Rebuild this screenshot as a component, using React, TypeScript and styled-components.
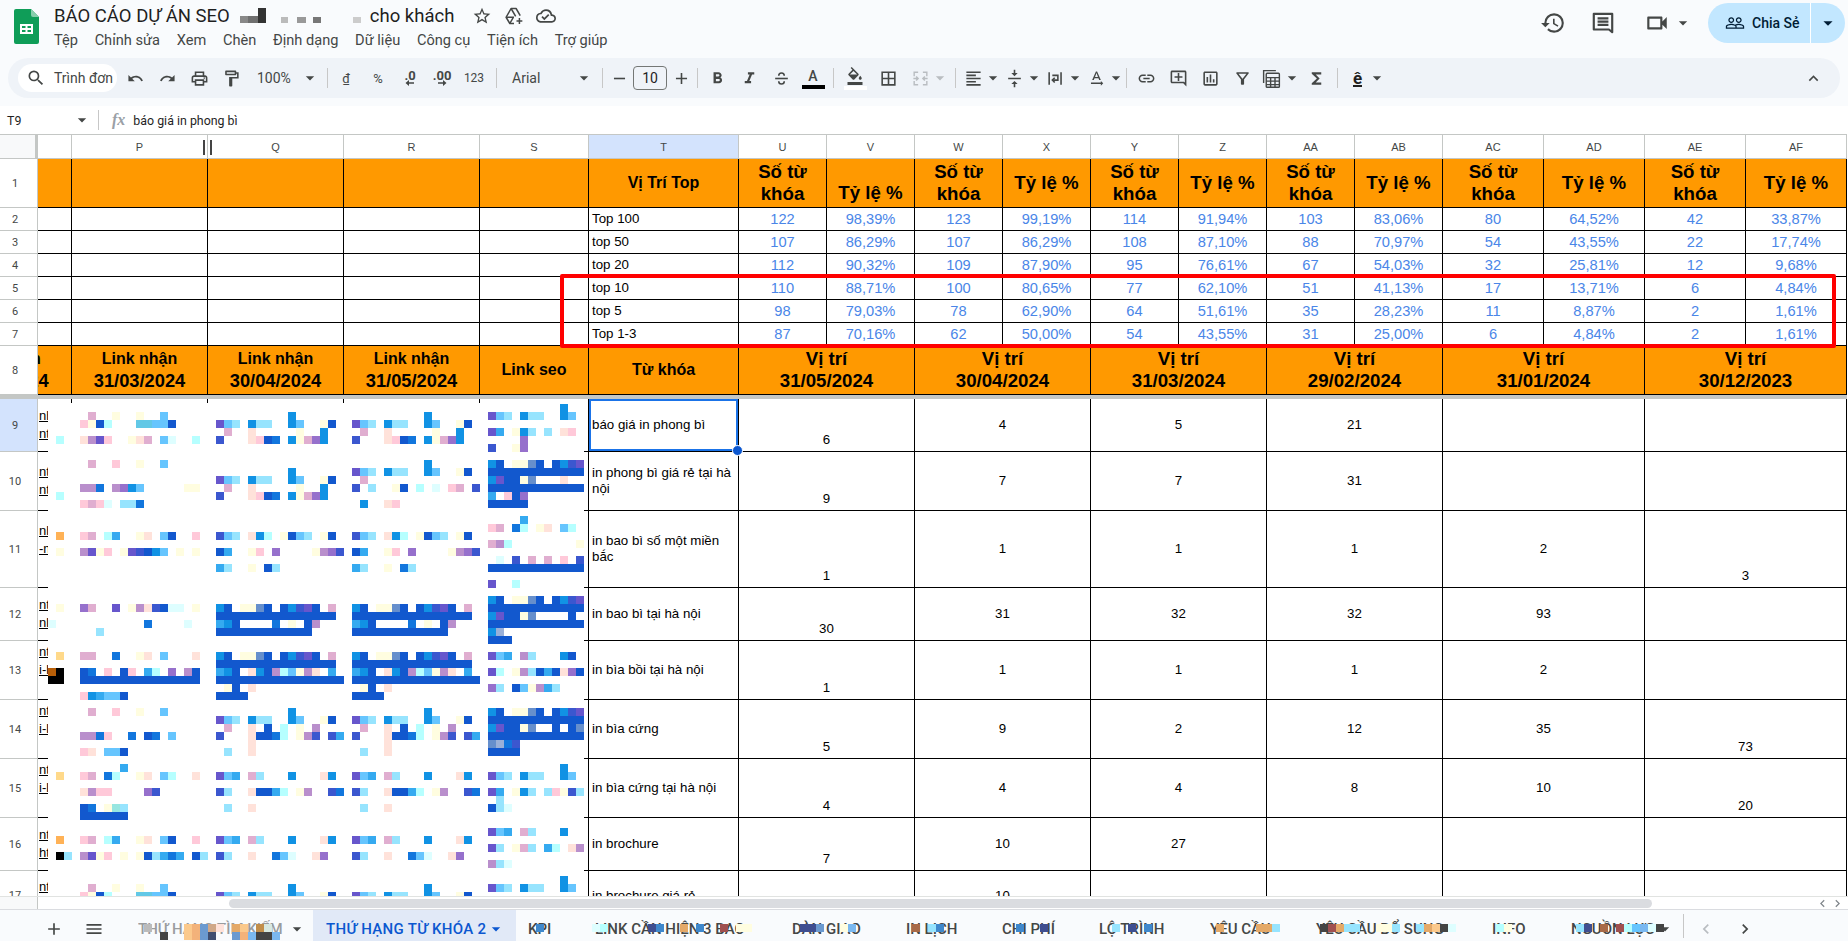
import React from 'react';
import styled, { createGlobalStyle } from 'styled-components';
import {
  MdAdd, MdArrowDropDown, MdBorderAll, MdChevronLeft, MdChevronRight, MdExpandLess, MdFormatAlignLeft,
  MdFormatBold, MdFormatColorFill, MdFormatItalic, MdOutlineFormatPaint, MdFunctions, MdHistory, MdLink, MdMenu,
  MdOutlineAddComment, MdOutlineCloudDone, MdOutlineFilterAlt, MdOutlineInsertChart,
  MdOutlineLocalPrintshop, MdOutlineVideocam, MdPeopleOutline, MdRedo, MdRemove, MdSearch, MdStarBorder,
  MdTextRotationNone, MdUndo, MdVerticalAlignCenter,
} from 'react-icons/md';

const GlobalStyle = createGlobalStyle`
  html, body { margin: 0; padding: 0; height: 100%; overflow: hidden; background: #f9fbfd; }
  body { font-family: Roboto, "Liberation Sans", sans-serif; }
`;

const Page = styled.div`
  width: 1848px;
  height: 941px;
  display: flex;
  flex-direction: column;
  overflow: hidden;
`;

/* top bar */
const Header = styled.header`
  height: 58px;
  flex: none;
  display: flex;
  align-items: flex-start;
`;
const Logo = styled.svg`
  width: 25px;
  height: 35px;
  margin: 9px 15px 0 14px;
  flex: none;
`;
const DocInfo = styled.div`
  display: flex;
  flex-direction: column;
  flex: 1;
`;
const TitleRow = styled.div`
  display: flex;
  align-items: center;
  height: 24px;
  margin-top: 4px;
  color: #1f1f1f;
  font-size: 18.5px;
`;
const TitleText = styled.span`
  white-space: nowrap;
`;
const TitleBlots = styled.svg`
  width: 121px;
  height: 16px;
  margin: 0 9px 0 10px;
  flex: none;
`;
const TitleIcons = styled.div`
  display: flex;
  align-items: center;
  gap: 12px;
  margin-left: 18px;
  color: #444746;
  font-size: 20px;
`;
const MenuBar = styled.nav`
  display: flex;
  gap: 16.7px;
  margin-top: 1px;
  font-size: 14.6px;
  line-height: 22px;
  color: #444746;
`;
const HeaderActions = styled.div`
  display: flex;
  align-items: center;
  height: 46px;
  color: #444746;
`;
const ActionIcon = styled.span<{ $gap?: number }>`
  display: flex;
  align-items: center;
  font-size: 26px;
  margin-right: ${(p) => p.$gap ?? 0}px;
`;
const ShareButton = styled.div`
  width: 137px;
  height: 40px;
  margin: 0 3px 0 15px;
  border-radius: 20px;
  background: #c2e7ff;
  color: #001d35;
  display: flex;
  align-items: center;
  font-size: 14px;
  font-weight: 500;
`;
const ShareMain = styled.span`
  width: 103px;
  height: 40px;
  display: flex;
  align-items: center;
  gap: 7px;
  padding-left: 17px;
  box-sizing: border-box;
  border-right: 1px solid #fff;
  font-size: 14px;
  svg { font-size: 20px; }
`;
const ShareCaret = styled.span`
  flex: 1;
  display: flex;
  justify-content: center;
  font-size: 22px;
`;

/* toolbar */
const Toolbar = styled.div`
  height: 40px;
  flex: none;
  margin: 0 8px;
  border-radius: 20px;
  background: #eff3f8;
  display: flex;
  align-items: center;
  color: #444746;
`;
const SearchPill = styled.div`
  width: 99px;
  height: 28px;
  margin: 0 2px 0 10px;
  border-radius: 14px;
  background: #fff;
  display: flex;
  align-items: center;
  gap: 8px;
  padding-left: 8px;
  box-sizing: border-box;
  font-size: 14px;
  overflow: hidden;
  white-space: nowrap;
  svg { font-size: 20px; flex: none; }
`;
const Tool = styled.div<{ $w?: number; $faded?: boolean; $start?: boolean; $small?: boolean }>`
  width: ${(p) => p.$w ?? 32}px;
  height: 32px;
  flex: none;
  display: flex;
  align-items: center;
  justify-content: ${(p) => (p.$start ? 'flex-start' : 'center')};
  padding-left: ${(p) => (p.$start ? 3 : 0)}px;
  box-sizing: border-box;
  font-size: 14px;
  color: ${(p) => (p.$faded ? '#b9bdc1' : 'inherit')};
  position: relative;
  svg { font-size: ${(p) => (p.$small ? 17 : 19)}px; flex: none; }
`;
const Caret = styled(MdArrowDropDown)<{ $left?: number }>`
  font-size: 20px !important;
  margin-left: ${(p) => p.$left ?? 0}px;
`;
const Sep = styled.span<{ $l?: number; $r?: number }>`
  width: 1px;
  height: 20px;
  flex: none;
  background: #c7c7c7;
  margin: 0 ${(p) => p.$r ?? 3}px 0 ${(p) => p.$l ?? 3}px;
`;
const ToolLabel = styled.span<{ $size?: number; $w?: number; $bold?: boolean; $indent?: number }>`
  font-size: ${(p) => p.$size ?? 14}px;
  font-weight: ${(p) => (p.$bold ? 700 : 400)};
  width: ${(p) => (p.$w ? `${p.$w}px` : 'auto')};
  padding-left: ${(p) => p.$indent ?? 0}px;
  box-sizing: border-box;
  white-space: nowrap;
`;
const DongSign = styled.span`
  font-size: 13px;
  text-decoration: underline;
`;
const DecimalTool = styled.span`
  display: flex;
  flex-direction: column;
  align-items: center;
  line-height: 11px;
  font-size: 13px;
  font-weight: 700;
  svg { font-size: 9px; margin-top: -2px; }
`;
const SizeBox = styled.div`
  width: 34px;
  height: 24px;
  flex: none;
  border: 1px solid #747775;
  border-radius: 4px;
  box-sizing: border-box;
  display: flex;
  align-items: center;
  justify-content: center;
  font-size: 14px;
  color: #1f1f1f;
`;
const ColorGlyph = styled.span<{ $bar: string }>`
  width: 24px;
  display: flex;
  flex-direction: column;
  align-items: center;
  font-size: 14px;
  font-weight: 500;
  line-height: 16px;
  &::after {
    content: '';
    display: block;
    width: 23px;
    height: 4px;
    margin-top: 1px;
    background: ${(p) => p.$bar};
  }
`;
const FillGlyph = styled(ColorGlyph)`
  svg { font-size: 18px; }
`;
const HatE = styled.span`
  margin-left: 5px;
  font-size: 17px;
  font-weight: 700;
  color: #1f1f1f;
  line-height: 16px;
  border-bottom: 2px solid #1f1f1f;
  height: 15px;
`;
const Spacer = styled.span`
  flex: 1;
`;

/* formula bar */
const FormulaBar = styled.div`
  height: 28px;
  flex: none;
  margin-top: 8px;
  background: #fff;
  display: flex;
  align-items: center;
  font-size: 12.4px;
  color: #1f1f1f;
`;
const NameBox = styled.div`
  width: 92px;
  display: flex;
  align-items: center;
  padding-left: 7px;
  box-sizing: border-box;
  color: #1f1f1f;
  svg { font-size: 20px; margin-left: auto; color: #444746; }
`;
const FxSep = styled.span`
  width: 1px;
  height: 20px;
  background: #c7c7c7;
  margin: 0 13px 0 6px;
`;
const FxGlyph = styled.span`
  font-family: "Liberation Serif", serif;
  font-style: italic;
  font-weight: 700;
  font-size: 16px;
  color: #9aa0a6;
  margin-right: 8px;
`;

/* sheet */
const Sheet = styled.div`
  flex: none;
  position: relative;
  height: 762px;
  overflow: hidden;
  background: #fff;
  display: grid;
  grid-template-columns: 38px 34px 136px 136px 136px 109px 150px repeat(8, 88px) repeat(4, 101px);
  grid-template-rows: 25px 49px repeat(6, 23px) 49px 4px 53px 59px 77px 53px 59px 59px 59px 53px 50px;
`;
const Corner = styled.div`
  background: #f8f9fa;
  border-top: 1px solid #c4c7c5;
  border-right: 3px solid #c4c7c5;
  border-bottom: 1px solid #c4c7c5;
  box-sizing: border-box;
`;
const ColHead = styled.div<{ $active?: boolean }>`
  background: ${(p) => (p.$active ? '#d3e3fd' : '#fff')};
  border-top: 1px solid #c4c7c5;
  border-right: 1px solid #c4c7c5;
  border-bottom: 1px solid #c4c7c5;
  box-sizing: border-box;
  display: flex;
  align-items: center;
  justify-content: center;
  font-family: "Liberation Sans", Arial, sans-serif;
  font-size: 11px;
  color: #444746;
`;
const RowHead = styled.div<{ $active?: boolean }>`
  background: ${(p) => (p.$active ? '#d3e3fd' : '#fff')};
  border-right: 1px solid #c4c7c5;
  border-bottom: 1px solid #c4c7c5;
  box-sizing: border-box;
  padding-right: 7px;
  display: flex;
  align-items: center;
  justify-content: center;
  font-size: 11px;
  color: #444746;
`;
const Cell = styled.div<{
  $span?: number;
  $orange?: boolean;
  $size?: number;
  $bold?: boolean;
  $blue?: boolean;
  $left?: boolean;
  $v?: 'center' | 'flex-end';
  $selected?: boolean;
}>`
  grid-column: span ${(p) => p.$span ?? 1};
  position: relative;
  box-sizing: border-box;
  min-width: 0;
  display: flex;
  align-items: ${(p) => p.$v ?? 'center'};
  justify-content: ${(p) => (p.$left ? 'flex-start' : 'center')};
  text-align: ${(p) => (p.$left ? 'left' : 'center')};
  padding: ${(p) => (p.$v === 'flex-end' ? '0 3px 3px' : '0 3px')};
  border-right: 1px solid #000;
  border-bottom: 1px solid #000;
  background: ${(p) => (p.$orange ? '#ff9900' : '#fff')};
  color: ${(p) => (p.$blue ? '#4a86e8' : '#000')};
  font-family: "Liberation Sans", Arial, sans-serif;
  font-size: ${(p) => p.$size ?? 13.3}px;
  font-weight: ${(p) => (p.$bold ? 700 : 400)};
  line-height: ${(p) => (p.$bold ? '22px' : '16px')};
  box-shadow: ${(p) => (p.$selected ? 'inset 0 0 0 2px #1a73e8' : 'none')};
`;
const DateLine = styled.span`
  font-size: 18.3px;
`;
const ClippedCell = styled(Cell)`
  overflow: hidden;
  justify-content: flex-start;
  padding: 0;
`;
const ClippedHeading = styled.div`
  flex: none;
  width: 100px;
  margin-left: -85px;
  white-space: nowrap;
`;
const LinkScraps = styled.div<{ $low?: boolean }>`
  padding: 0 0 ${(p) => (p.$low ? 18 : 0)}px 1px;
  font-size: 13px;
  line-height: 18px;
  text-align: left;
  text-decoration: underline;
  white-space: pre;
`;
const FreezeBar = styled.div`
  grid-column: 1 / -1;
  background: #c4c7c5;
`;
const FillHandle = styled.span`
  position: absolute;
  right: -5px;
  bottom: -5px;
  width: 9px;
  height: 9px;
  border-radius: 50%;
  border: 1px solid #fff;
  background: #0b57d0;
  z-index: 3;
`;
const ResizeHandle = styled.span`
  position: absolute;
  left: 203px;
  top: 6px;
  width: 5px;
  height: 15px;
  border-left: 2px solid #444;
  border-right: 2px solid #444;
`;
const RedBox = styled.div`
  position: absolute;
  left: 560px;
  top: 140px;
  width: 1276px;
  height: 74px;
  box-sizing: border-box;
  border: 4px solid #ff0000;
  border-radius: 2px;
  z-index: 2;
`;
const MosaicPanel = styled.div`
  position: absolute;
  left: 48px;
  top: 269px;
  width: 536px;
  height: 493px;
  background: #fff;
  padding-top: 1px;
  box-sizing: border-box;
  svg { display: block; }
`;

/* scrollbar + tabs */
const ScrollRow = styled.div`
  height: 13px;
  flex: none;
  background: #fff;
  border-top: 1px solid #e1e3e1;
  box-sizing: border-box;
  display: flex;
  align-items: center;
  color: #80868b;
`;
const ScrollCorner = styled.span`
  width: 38px;
  height: 100%;
  box-sizing: border-box;
  border-right: 1px solid #c4c7c5;
  background: #f8f9fa;
`;
const ScrollThumb = styled.span`
  width: 1423px;
  height: 9px;
  margin-left: 191px;
  border-radius: 5px;
  background: #dadce0;
`;
const ScrollArrows = styled.span`
  margin-left: auto;
  width: 30px;
  margin-right: 3px;
  display: flex;
  font-size: 15px;
`;
const TabBar = styled.div`
  height: 32px;
  flex: none;
  position: relative;
  display: flex;
  align-items: stretch;
  background: #f9fbfd;
  border-top: 1px solid #dadce0;
  box-sizing: border-box;
  color: #444746;
  font-size: 15px;
  font-weight: 500;
  white-space: nowrap;
`;
const TabIcon = styled.span<{ $w: number; $faded?: boolean }>`
  width: ${(p) => p.$w}px;
  flex: none;
  display: flex;
  align-items: center;
  justify-content: flex-end;
  padding-top: 7px;
  box-sizing: border-box;
  font-size: 20px;
  color: ${(p) => (p.$faded ? '#b9bdc1' : 'inherit')};
`;
const Tab = styled.span<{ $w: number; $active?: boolean; $pad?: number }>`
  width: ${(p) => p.$w}px;
  flex: none;
  display: flex;
  align-items: center;
  box-sizing: border-box;
  padding: 7px 0 0 ${(p) => p.$pad ?? 0}px;
  background: ${(p) => (p.$active ? '#e1e9f7' : 'transparent')};
  color: ${(p) => (p.$active ? '#0b57d0' : 'inherit')};
  letter-spacing: ${(p) => (p.$active ? '0.3px' : '0')};
  svg { font-size: 20px; }
`;
const TabText = styled.span<{ $w: number }>`
  width: ${(p) => p.$w}px;
  flex: none;
  overflow: hidden;
  color: #9a9c9e;
`;
const TabSep = styled.span`
  width: 1px;
  height: 24px;
  margin: 4px 0 0 2px;
  background: #c7c7c7;
  flex: none;
`;
const TabBlots = styled.svg`
  position: absolute;
  left: 0;
  top: 14px;
  pointer-events: none;
`;

const PALETTE: Record<string, string> = {
  p: '#ffc9d9', m: '#e0aed0', l: '#b98fcc', v: '#9670cc', i: '#6756cc', n: '#3b57cf', B: '#1258ce',
  b: '#1276dd', c: '#1192e4', a: '#35aaf0', s: '#66c5fe', t: '#97e4fe', u: '#b6ffff', w: '#defeff',
  y: '#fffde0', o: '#ffe2da', g: '#668fcc', G: '#9ab0d8', O: '#ffb256', Y: '#ffd98a', K: '#000000',
  R: '#b85f08', T: '#62c8e6', M: '#97e6e0', x: '#bbbbbb', f: '#fbc98c', h: '#f3b27a', D: '#6b9ad0',
  e: '#d0a888', q: '#3f4e70', E: '#e4a968', d: '#444444', j: '#a86a48', k: '#c28e4a', S: '#3f88cc',
  N: '#3f4e90', r: '#a05050', z: '#d8e8e0', V: '#7ab8f0',
};

// redacted area, one entry per 8px row: "<column><colours>[*repeat]"
const SHEET_BLOTS: Record<number, string> = {
  0: '64c',
  1: '5m 8y 11y 14s 30c 47c 55ist 59ctt 64cs',
  2: '4pyBu 11TTssB 21ist 25ctt 30cs 34yB 38ist 42ctt 47cs 51yB',
  3: '22m 25o 31y 34c 39m 42o 48y 51c 55ia 58yct 62t 64op',
  4: '1u 4olip 10yom 14sw 18u 21n 25opBb 30cymvc 38n 42opBb 47cymvc 59v',
  5: '55n 58yv',
  7: '5m 8p 11y 14s 47c 55cB 58yygB 63Bcni',
  8: '30c 38ist 42ctt 47cs 51yB 55B*12',
  9: '21ist 25ctt 30cs 34yB 39m 55ciBByg 64o',
  10: '4llb 8lvcs 17yy 22m 25o 31y 34c 38n 40t 43yB 46u 48w 50pm 53n 55B*12',
  11: '1u 21n 25opBb 30cymvc 55a 57pBv',
  12: '4pmpw 9ttb 39c 42op 55B*5',
  14: '59a',
  15: '55pm 58bu 61yo 64su',
  16: '1O 4pm 7ua 11yo 14sB 18p 21nst 25ocu 29yBst 34yB 38nst 42ocu 46yBst 51yB',
  17: '55mlu 66y',
  18: '1y 4liyp 9yinBcs 16y 18y 21Ba 25yp 28v 33ylvn 38Ba 42yp 45v 50ylvn',
  19: '56w 58n 60m 62m 64p 66n',
  20: '21at 25y 27Bt 38at 42y 44bt 55B*12',
  22: '55i 58u',
  24: '55cB 58yygB 63Bcni',
  25: '1y 4vm 8i 10ylonBww 18y 21cB 24yygB 29Bcni 33B 35m 38cB 41yygB 46Bcni 50B 52m 55B*12',
  26: '21B*15 38B*15 55ciBByg 65B',
  27: '0w 12b 17w 21acB 28b 30y 32Bl 38acB 45b 47y 49Bl 55B*12',
  28: '6t 21B*12 38B*12 55cG',
  29: '55B*3',
  31: '1Y 4mm 8b 11yo 14s 18o 21cB 24yygB 29Bcni 33B 35m 38cB 41yygB 46Bcni 50B 52m 55isa 59lt 64cB',
  32: '21B*15 38B*15',
  33: '0RK 4Bb 7p 9Bp 12au 15v 17lB 21acB 25ocBlusylo 35a 38acB 42ocBlusylo 52a 55iu 58yltBaBovB',
  34: '0KK 4B*15 21B*16 38B*16',
  35: '22yB 25o 39yB 42o 55vt 58Bsylat',
  36: '4pcassB 21B*4 38B*4',
  38: '5m 8p 11y 14s 30c 47c 55cB 58yygB 63Bcni',
  39: '21ist 25ctt 30cs 34yB 38ist 42ctt 47cs 51yB 55B*12',
  40: '22m 25o 27B 29u 31y 33l 39m 42o 44B 46u 48y 50l 55ciBByg 63B 65Bg',
  41: '4llbp 10b 12Bb 15s 21n 25oBBbu 31yln 35na 38n 42oBBbu 48yln 52na 55B*12',
  42: '25o 42o 55gGbn',
  43: '4po 7ssB 22t 25o 39t 42o 55B*4',
  45: '9a 64c',
  46: '1Y 4pm 7bu 11yo 14su 18o 21isa 25mt 30c 34oc 38isa 42mt 47c 51oc 55ist 59ctt 64cs',
  48: '4olpp 12vn 21nt 25oBBau 31yl 35nb 38nt 42oBBau 48yl 52nb 55ia 58yct 62tpynt',
  49: '56t',
  50: '4Bb 7yMt 22t 25o 39t 42o 55Btw',
  51: '4B*6',
  53: '55isa 59mt 64c',
  54: '1O 4pm 7ua 11yo 14sB 18p 21isa 25mt 30c 34oc 38isa 42mt 47c 51oc',
  55: '55it 58ymt 62au 65ol',
  56: '1Kt 4liyp 9y 11yBtaba 18Bt 21nt 25o 28bsw 33ov 38nt 42o 45bsw 50ov',
  57: '55ltw',
  59: '64c',
  60: '5m 8y 11y 14s 30c 47c 55ist 59ctt 64cs',
  61: '4pyBu 11TTssB 21ist 25ctt 30cs 34yB 38ist 42ctt 47cs 51yB',
};

const TAB_BLOTS: Record<number, string> = {
  0: '18x 23fhDeo 29Ef 32kz 67S 74wu 81NS 85E 87S 90r 92yy 100NN 102D 105yV 114j 116tS 127S 130N 139t 141N 143S 152E 157EE 159t 165drEtt 172yyt 177tEfdw 187uy 197tN 200j 202rusV 206wd',
  1: '20d 23fhDq 29DhV 32dd 34V',
};

const Blots = ({ data }: { data: Record<number, string> }) => (
  <>
    {Object.entries(data).flatMap(([row, line]) =>
      line.split(' ').flatMap((token) => {
        const match = token.match(/^(\d+)([a-zA-Z]+)(?:\*(\d+))?$/);
        if (!match) return [];
        const colours = match[3] ? match[2].repeat(Number(match[3])) : match[2];
        return colours.split('').map((key, i) => (
          <rect
            key={`${row}-${match[1]}-${i}`}
            x={(Number(match[1]) + i) * 8}
            y={Number(row) * 8}
            width={8}
            height={8}
            fill={PALETTE[key]}
          />
        ));
      }),
    )}
  </>
);

const SheetsLogo = () => (
  <Logo viewBox="0 0 25 35">
    <path d="M2 0h15l8 8v25a2 2 0 0 1-2 2H2a2 2 0 0 1-2-2V2a2 2 0 0 1 2-2z" fill="#0f9d58" />
    <path d="M17 0l8 8h-6a2 2 0 0 1-2-2z" fill="#87ceac" />
    <path d="M6 15h13v10H6zm2 2v2h3.5v-2zm5.5 0v2H17v-2zM8 21v2h3.5v-2zm5.5 0v2H17v-2z" fill="#fff" fillRule="evenodd" />
  </Logo>
);

const AddToDriveIcon = () => (
  <svg width="20" height="20" viewBox="0 0 24 24" fill="none" stroke="currentColor" strokeWidth="1.8" strokeLinejoin="round">
    <path d="M12 21H7l-4.5-7.5L8.5 3h6l5 8.5" />
    <path d="M8.5 3l5.5 9.5M2.5 13.5H12M7 21l4-7" />
    <path d="M18.5 14.5v7M15 18h7" />
  </svg>
);

const CommentsIcon = () => (
  <svg width="26" height="26" viewBox="0 0 24 24" fill="none" stroke="currentColor" strokeWidth="2" strokeLinejoin="round">
    <path d="M3.5 3.5h17v17l-3-2.5h-14z" />
    <path d="M7 7.8h10M7 10.8h10M7 13.8h10" />
  </svg>
);

const StrikeIcon = () => (
  <svg width="19" height="19" viewBox="0 0 24 24" fill="none" stroke="currentColor" strokeWidth="2">
    <path d="M4 12h16" />
    <path d="M8.5 8.5C8.5 6.3 10 5 12 5s3.5 1.3 3.5 3.5" />
    <path d="M8.5 15.5C8.5 17.7 10 19 12 19s3.5-1.3 3.5-3.5" />
  </svg>
);

const MergeIcon = () => (
  <svg width="19" height="19" viewBox="0 0 24 24" fill="none" stroke="currentColor" strokeWidth="1.8">
    <path d="M4 9V4h5M15 4h5v5M20 15v5h-5M9 20H4v-5" />
    <path d="M3 12h6M6.5 9.5L9 12l-2.5 2.5M21 12h-6M17.5 9.5L15 12l2.5 2.5" />
  </svg>
);

const WrapIcon = () => (
  <svg width="19" height="19" viewBox="0 0 24 24" fill="none" stroke="currentColor" strokeWidth="2">
    <path d="M4 4v16M19 4v16M8 8h7v6H9" />
    <path d="M11 11l-3 3 3 3" />
  </svg>
);

const TableToolIcon = () => (
  <svg width="21" height="21" viewBox="0 0 24 24" fill="none" stroke="currentColor" strokeWidth="1.6">
    <path d="M3 17V3h14" />
    <rect x="6" y="6" width="15" height="16" rx="1" />
    <path d="M6 11h15M6 15h15M6 19h15M11 11v11M16 11v11" />
  </svg>
);

const SmallArrow = ({ right }: { right?: boolean }) => (
  <svg width="10" height="8" viewBox="0 0 10 8" fill="currentColor">
    <path d={right ? 'M1 3.2h5V1l3.5 3L6 7V4.8H1z' : 'M9 3.2H4V1L.5 4 4 7V4.8h5z'} />
  </svg>
);

const COLUMNS = ['', 'P', 'Q', 'R', 'S', 'T', 'U', 'V', 'W', 'X', 'Y', 'Z', 'AA', 'AB', 'AC', 'AD', 'AE', 'AF'];

const TOP_ROWS: { label: string; values: string[] }[] = [
  { label: 'Top 100', values: ['122', '98,39%', '123', '99,19%', '114', '91,94%', '103', '83,06%', '80', '64,52%', '42', '33,87%'] },
  { label: 'top 50', values: ['107', '86,29%', '107', '86,29%', '108', '87,10%', '88', '70,97%', '54', '43,55%', '22', '17,74%'] },
  { label: 'top 20', values: ['112', '90,32%', '109', '87,90%', '95', '76,61%', '67', '54,03%', '32', '25,81%', '12', '9,68%'] },
  { label: 'top 10', values: ['110', '88,71%', '100', '80,65%', '77', '62,10%', '51', '41,13%', '17', '13,71%', '6', '4,84%'] },
  { label: 'top 5', values: ['98', '79,03%', '78', '62,90%', '64', '51,61%', '35', '28,23%', '11', '8,87%', '2', '1,61%'] },
  { label: 'Top 1-3', values: ['87', '70,16%', '62', '50,00%', '54', '43,55%', '31', '25,00%', '6', '4,84%', '2', '1,61%'] },
];

const MONTHS = ['31/05/2024', '30/04/2024', '31/03/2024', '29/02/2024', '31/01/2024', '30/12/2023'];

const KEYWORD_ROWS: { row: number; scraps: string; low?: boolean; keyword: string; ranks: string[] }[] = [
  { row: 9, scraps: 'nh\nnt', keyword: 'báo giá in phong bì', ranks: ['6', '4', '5', '21', '', ''] },
  { row: 10, scraps: 'nt\nnt', keyword: 'in phong bì giá rẻ tại hà nội', ranks: ['9', '7', '7', '31', '', ''] },
  { row: 11, scraps: 'nh\n-m', low: true, keyword: 'in bao bì số một miền bắc', ranks: ['1', '1', '1', '1', '2', '3'] },
  { row: 12, scraps: 'nt\nnl', keyword: 'in bao bì tại hà nội', ranks: ['30', '31', '32', '32', '93', ''] },
  { row: 13, scraps: 'nt\ni-l', low: true, keyword: 'in bìa bồi tại hà nội', ranks: ['1', '1', '1', '1', '2', ''] },
  { row: 14, scraps: 'nt\ni-l', low: true, keyword: 'in bìa cứng', ranks: ['5', '9', '2', '12', '35', '73'] },
  { row: 15, scraps: 'nt\ni-l', low: true, keyword: 'in bìa cứng tại hà nội', ranks: ['4', '4', '4', '8', '10', '20'] },
  { row: 16, scraps: 'nt\nht', keyword: 'in brochure', ranks: ['7', '10', '27', '', '', ''] },
  { row: 17, scraps: 'nt', low: true, keyword: 'in brochure giá rẻ', ranks: ['', '10', '', '', '', ''] },
];

const MENU = ['Tệp', 'Chỉnh sửa', 'Xem', 'Chèn', 'Định dạng', 'Dữ liệu', 'Công cụ', 'Tiện ích', 'Trợ giúp'];

const TABS: [string, number][] = [
  ['KPI', 67], ['LINK CẦN HIỆN 3 BAO', 197], ['DÀN GIAO', 114], ['IN LỊCH', 96], ['CHI PHÍ', 97],
  ['LỘ TRÌNH', 111], ['YÊU CẦU', 106], ['YÊU CẦU BỔ SUNG', 176], ['INFO', 79],
];

const isLowRank = (col: number) => col === 0 || col === 5;

const TopBar = () => (
  <Header>
    <SheetsLogo />
    <DocInfo>
      <TitleRow>
        <TitleText>BÁO CÁO DỰ ÁN SEO</TitleText>
        <TitleBlots viewBox="0 0 121 16">
          <rect x="0" y="8" width="8" height="7" fill="#888" />
          <rect x="8" y="8" width="10" height="7" fill="#6f6f6f" />
          <rect x="18" y="0" width="8" height="15" fill="#333" />
          <rect x="41" y="9" width="7" height="6" fill="#bbb" />
          <rect x="57" y="9" width="9" height="6" fill="#999" />
          <rect x="73" y="9" width="8" height="6" fill="#777" />
          <rect x="113" y="9" width="8" height="6" fill="#ccc" />
        </TitleBlots>
        <TitleText>cho khách</TitleText>
        <TitleIcons>
          <MdStarBorder />
          <AddToDriveIcon />
          <MdOutlineCloudDone />
        </TitleIcons>
      </TitleRow>
      <MenuBar>
        {MENU.map((item) => (
          <span key={item}>{item}</span>
        ))}
      </MenuBar>
    </DocInfo>
    <HeaderActions>
      <ActionIcon $gap={24}><MdHistory /></ActionIcon>
      <ActionIcon $gap={28}><CommentsIcon /></ActionIcon>
      <ActionIcon $gap={3}><MdOutlineVideocam /></ActionIcon>
      <ActionIcon $gap={0}><Caret /></ActionIcon>
      <ShareButton>
        <ShareMain><MdPeopleOutline />Chia Sẻ</ShareMain>
        <ShareCaret><MdArrowDropDown /></ShareCaret>
      </ShareButton>
    </HeaderActions>
  </Header>
);

const ToolRow = () => (
  <Toolbar>
    <SearchPill><MdSearch />Trình đơn</SearchPill>
    <Tool $small><MdUndo /></Tool>
    <Tool $small><MdRedo /></Tool>
    <Tool><MdOutlineLocalPrintshop /></Tool>
    <Tool><MdOutlineFormatPaint /></Tool>
    <Tool $w={75} $start>
      <ToolLabel $w={50} $indent={7}>100%</ToolLabel>
      <Caret />
    </Tool>
    <Sep $l={5} $r={2} />
    <Tool><DongSign>₫</DongSign></Tool>
    <Tool><ToolLabel $size={13}>%</ToolLabel></Tool>
    <Tool><DecimalTool>.0<SmallArrow /></DecimalTool></Tool>
    <Tool><DecimalTool>.00<SmallArrow right /></DecimalTool></Tool>
    <Tool><ToolLabel $size={12}>123</ToolLabel></Tool>
    <Sep $l={6} $r={3} />
    <Tool $w={95} $start>
      <ToolLabel $w={71} $indent={9}>Arial</ToolLabel>
      <Caret />
    </Tool>
    <Sep $l={7} $r={2} />
    <Tool $w={28}><MdRemove /></Tool>
    <SizeBox>10</SizeBox>
    <Tool $w={29}><MdAdd /></Tool>
    <Sep $l={1} $r={3} />
    <Tool><MdFormatBold /></Tool>
    <Tool><MdFormatItalic /></Tool>
    <Tool><StrikeIcon /></Tool>
    <Tool><ColorGlyph $bar="#000">A</ColorGlyph></Tool>
    <Sep $l={4} $r={5} />
    <Tool><FillGlyph $bar="#fff"><MdFormatColorFill /></FillGlyph></Tool>
    <Tool $w={35}><MdBorderAll /></Tool>
    <Tool $w={48} $faded $start><ToolLabel $indent={2} /><MergeIcon /><Caret /></Tool>
    <Sep $l={1} $r={5} />
    <Tool $w={41} $start><MdFormatAlignLeft /><Caret /></Tool>
    <Tool $w={41} $start><MdVerticalAlignCenter /><Caret /></Tool>
    <Tool $w={41} $start><WrapIcon /><Caret /></Tool>
    <Tool $w={41} $start><MdTextRotationNone /><Caret /></Tool>
    <Sep $l={1} $r={3} />
    <Tool><MdLink /></Tool>
    <Tool><MdOutlineAddComment /></Tool>
    <Tool><MdOutlineInsertChart /></Tool>
    <Tool><MdOutlineFilterAlt /></Tool>
    <Tool $w={42} $start><TableToolIcon /><Caret /></Tool>
    <Tool $w={32}><MdFunctions /></Tool>
    <Sep $l={5} $r={7} />
    <Tool $w={46} $start><HatE>ê</HatE><Caret $left={5} /></Tool>
    <Spacer />
    <Tool $w={54}><MdExpandLess /></Tool>
  </Toolbar>
);

const App = () => (
  <Page>
    <GlobalStyle />
    <TopBar />
    <ToolRow />
    <FormulaBar>
      <NameBox>T9<MdArrowDropDown /></NameBox>
      <FxSep />
      <FxGlyph>fx</FxGlyph>
      báo giá in phong bì
    </FormulaBar>

    <Sheet>
      <Corner />
      {COLUMNS.map((letter, i) => (
        <ColHead key={i} $active={letter === 'T'}>{letter}</ColHead>
      ))}

      <RowHead>1</RowHead>
      {[0, 1, 2, 3, 4].map((i) => <Cell key={i} $orange />)}
      <Cell $orange $bold $size={16}>Vị Trí Top</Cell>
      {[0, 1, 2, 3, 4, 5].flatMap((i) => [
        <Cell key={`n${i}`} $orange $bold $size={18.67}>Số từ khóa</Cell>,
        <Cell key={`r${i}`} $orange $bold $size={18.67} $v={i === 0 ? 'flex-end' : 'center'}>Tỷ lệ %</Cell>,
      ])}

      {TOP_ROWS.flatMap((row, r) => [
        <RowHead key={`h${r}`}>{r + 2}</RowHead>,
        ...[0, 1, 2, 3, 4].map((i) => <Cell key={`e${r}-${i}`} />),
        <Cell key={`l${r}`} $left>{row.label}</Cell>,
        ...row.values.map((value, i) => (
          <Cell key={`v${r}-${i}`} $blue $size={14.67}>{value}</Cell>
        )),
      ])}

      <RowHead>8</RowHead>
      <ClippedCell $orange $bold $size={16}>
        <ClippedHeading>Link nhận<br /><DateLine>30/04/2024</DateLine></ClippedHeading>
      </ClippedCell>
      <Cell $orange $bold $size={16}><span>Link nhận<br /><DateLine>31/03/2024</DateLine></span></Cell>
      <Cell $orange $bold $size={16}><span>Link nhận<br /><DateLine>30/04/2024</DateLine></span></Cell>
      <Cell $orange $bold $size={16}><span>Link nhận<br /><DateLine>31/05/2024</DateLine></span></Cell>
      <Cell $orange $bold $size={16}>Link seo</Cell>
      <Cell $orange $bold $size={16}>Từ khóa</Cell>
      {MONTHS.map((month) => (
        <Cell key={month} $span={2} $orange $bold $size={18.67}><span>Vị trí<br />{month}</span></Cell>
      ))}

      <FreezeBar />

      {KEYWORD_ROWS.flatMap((row) => [
        <RowHead key={`h${row.row}`} $active={row.row === 9}>{row.row}</RowHead>,
        <ClippedCell key={`o${row.row}`}><LinkScraps $low={row.low}>{row.scraps}</LinkScraps></ClippedCell>,
        ...[0, 1, 2, 3].map((i) => <Cell key={`e${row.row}-${i}`} />),
        <Cell key={`k${row.row}`} $left $selected={row.row === 9}>
          {row.keyword}
          {row.row === 9 && <FillHandle />}
        </Cell>,
        ...row.ranks.map((rank, i) => (
          <Cell key={`p${row.row}-${i}`} $span={2} $v={isLowRank(i) ? 'flex-end' : 'center'}>{rank}</Cell>
        )),
      ])}

      <ResizeHandle />
      <MosaicPanel>
        <svg width="536" height="492" shapeRendering="crispEdges">
          <Blots data={SHEET_BLOTS} />
        </svg>
      </MosaicPanel>
      <RedBox />
    </Sheet>

    <ScrollRow>
      <ScrollCorner />
      <ScrollThumb />
      <ScrollArrows><MdChevronLeft /><MdChevronRight /></ScrollArrows>
    </ScrollRow>

    <TabBar>
      <TabIcon $w={64}><MdAdd /></TabIcon>
      <TabIcon $w={40}><MdMenu /></TabIcon>
      <Tab $w={209} $pad={34}>
        <TabText $w={149}>THỨ HẠNG TÌM KIẾM</TabText><MdArrowDropDown />
      </Tab>
      <Tab $w={203} $active $pad={13}>
        THỨ HẠNG TỪ KHÓA 2<MdArrowDropDown />
      </Tab>
      <Tab $w={12} />
      {TABS.map(([label, width]) => (
        <Tab key={label} $w={width}>{label}</Tab>
      ))}
      <Tab $w={110}>NGUỒN LỰC<MdArrowDropDown /></Tab>
      <TabSep />
      <TabIcon $w={32} $faded><MdChevronLeft /></TabIcon>
      <TabIcon $w={39}><MdChevronRight /></TabIcon>
      <TabBlots width="1680" height="16" shapeRendering="crispEdges">
        <Blots data={TAB_BLOTS} />
      </TabBlots>
    </TabBar>
  </Page>
);

export default App;
